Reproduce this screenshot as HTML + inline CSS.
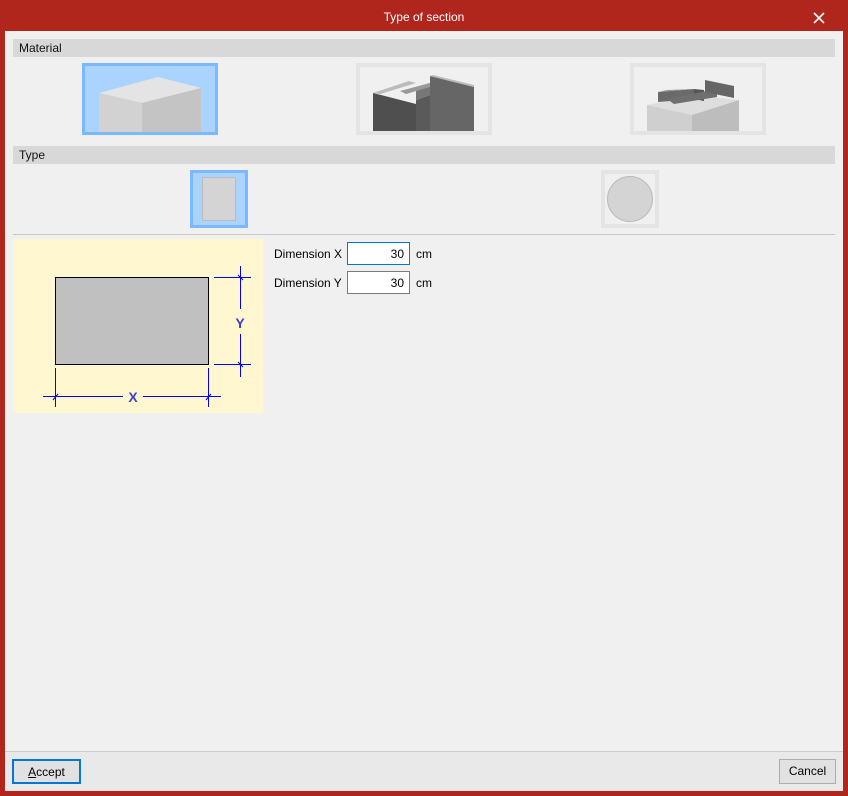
<!DOCTYPE html>
<html><head><style>
*{margin:0;padding:0;box-sizing:border-box}
body{width:848px;height:796px;background:#b0261d;font-family:"Liberation Sans",sans-serif;font-size:12px;position:relative;overflow:hidden}
.abs{position:absolute}
#title{left:0;top:0;width:848px;height:31px;color:#fff;text-align:center;line-height:35px;font-size:12px}
#client{left:5px;top:31px;width:838px;height:760px;background:#f0f0f0}
.bar{background:#d8d8d8;height:18px;left:13px;width:822px;padding-left:6px;line-height:18px;color:#111}
.sel{border:3px solid #7ab8ff;background:#aad4ff}
.dis{border:4px solid #e4e4e4;background:#f0f0f0}
input{position:absolute;width:63px;height:23px;border:1px solid #7a7a7a;text-align:right;padding-right:5px;font-family:"Liberation Sans",sans-serif;font-size:12px;background:#fff}
.btn{border:1px solid #adadad;background:#e1e1e1;text-align:center;line-height:23px}
</style></head><body>
<div id="title" class="abs">Type of section</div>
<svg class="abs" style="left:813px;top:12px" width="12" height="12"><path d="M1 1L11 11M11 1L1 11" stroke="#fff" stroke-width="1.6"/></svg>
<div id="client" class="abs"></div>
<div class="abs bar" style="top:39px">Material</div>
<div class="abs sel" style="left:82px;top:63px;width:136px;height:72px">
<svg width="130" height="66"><polygon points="14,27 73,11 116,22 57,37" fill="#e4e4e4"/><polygon points="14,27 57,37 57,66 14,66" fill="#d2d2d2"/><polygon points="57,37 116,22 116,66 57,66" fill="#c4c4c4"/></svg></div>
<div class="abs dis" style="left:356px;top:63px;width:136px;height:72px">
<svg width="128" height="64">
<polygon points="13,26 56,37 56,64 13,64" fill="#4f4f4f"/>
<polygon points="13,26 49,14 56,16 20,27" fill="#bbb"/>
<polygon points="56,33 70,28 70,64 56,64" fill="#5a5a5a"/>
<polygon points="56,20 70,16 70,28 56,33" fill="#777"/>
<polygon points="70,9 114,20 114,64 70,64" fill="#666"/>
<polygon points="70,9 73,8 114,18 114,20" fill="#bbb"/>
<polygon points="40,24 70,16 70,20 46,27" fill="#999"/>
</svg></div>
<div class="abs dis" style="left:630px;top:63px;width:136px;height:72px">
<svg width="128" height="64">
<polygon points="13,38 60,28 105,33 58,48" fill="#dedede"/>
<polygon points="13,38 58,48 58,64 13,64" fill="#cfcfcf"/>
<polygon points="58,48 105,33 105,64 58,64" fill="#bdbdbd"/>
<polygon points="24,25 60,22 60,32 24,35" fill="#6a6a6a"/>
<polygon points="60,22 70,23 70,34 60,32" fill="#555"/>
<polygon points="33,32 83,22 83,30 40,37" fill="#6f6f6f"/>
<polygon points="71,13 100,19 100,31 71,25" fill="#666"/>
<polygon points="24,25 33,23 60,22" fill="#999"/>
</svg></div>
<div class="abs bar" style="top:146px">Type</div>
<div class="abs sel" style="left:190px;top:170px;width:58px;height:58px"><div style="margin:4px 9px;width:34px;height:44px;background:#d4d4d4;border:1px solid #bbb"></div></div>
<div class="abs dis" style="left:601px;top:170px;width:58px;height:58px"><div style="margin:2px;width:46px;height:46px;border-radius:50%;background:#d4d4d4;border:1px solid #bbb"></div></div>
<div class="abs" style="left:13px;top:234px;width:822px;height:1px;background:#c8c8c8"></div>
<div class="abs" style="left:13px;top:239px;width:250px;height:174px;background:#fff7d0">
<svg width="250" height="174">
<rect x="42.5" y="38.5" width="153" height="87" fill="#c0c0c0" stroke="#000"/>
<g stroke="#00f" stroke-width="1" fill="none">
<path d="M201 38.5H238M201 125.5H238M227.5 27V70M227.5 95V138M225 36l5 5M225 123l5 5"/>
<path d="M42.5 129V168M195.5 129V168M30 157.5H110M130 157.5H208M40 161l5-6M193 161l5-6"/>
</g>
<text x="227" y="89" fill="#3f3fcf" font-weight="bold" font-size="14" text-anchor="middle">Y</text>
<text x="120" y="163" fill="#3f3fcf" font-weight="bold" font-size="14" text-anchor="middle">X</text>
</svg></div>
<div class="abs" style="left:274px;top:247px">Dimension X</div>
<input style="left:347px;top:242px;border-color:#0078d7" value="30">
<div class="abs" style="left:416px;top:247px">cm</div>
<div class="abs" style="left:274px;top:276px">Dimension Y</div>
<input style="left:347px;top:271px" value="30">
<div class="abs" style="left:416px;top:276px">cm</div>
<div class="abs" style="left:5px;top:751px;width:838px;height:40px;background:#e9e9e9;border-top:1px solid #ccc"></div>
<div class="abs btn" style="left:12px;top:759px;width:69px;height:25px;border:2px solid #0078d7"><u>A</u>ccept</div>
<div class="abs btn" style="left:779px;top:759px;width:57px;height:25px">Cancel</div>
</body></html>
